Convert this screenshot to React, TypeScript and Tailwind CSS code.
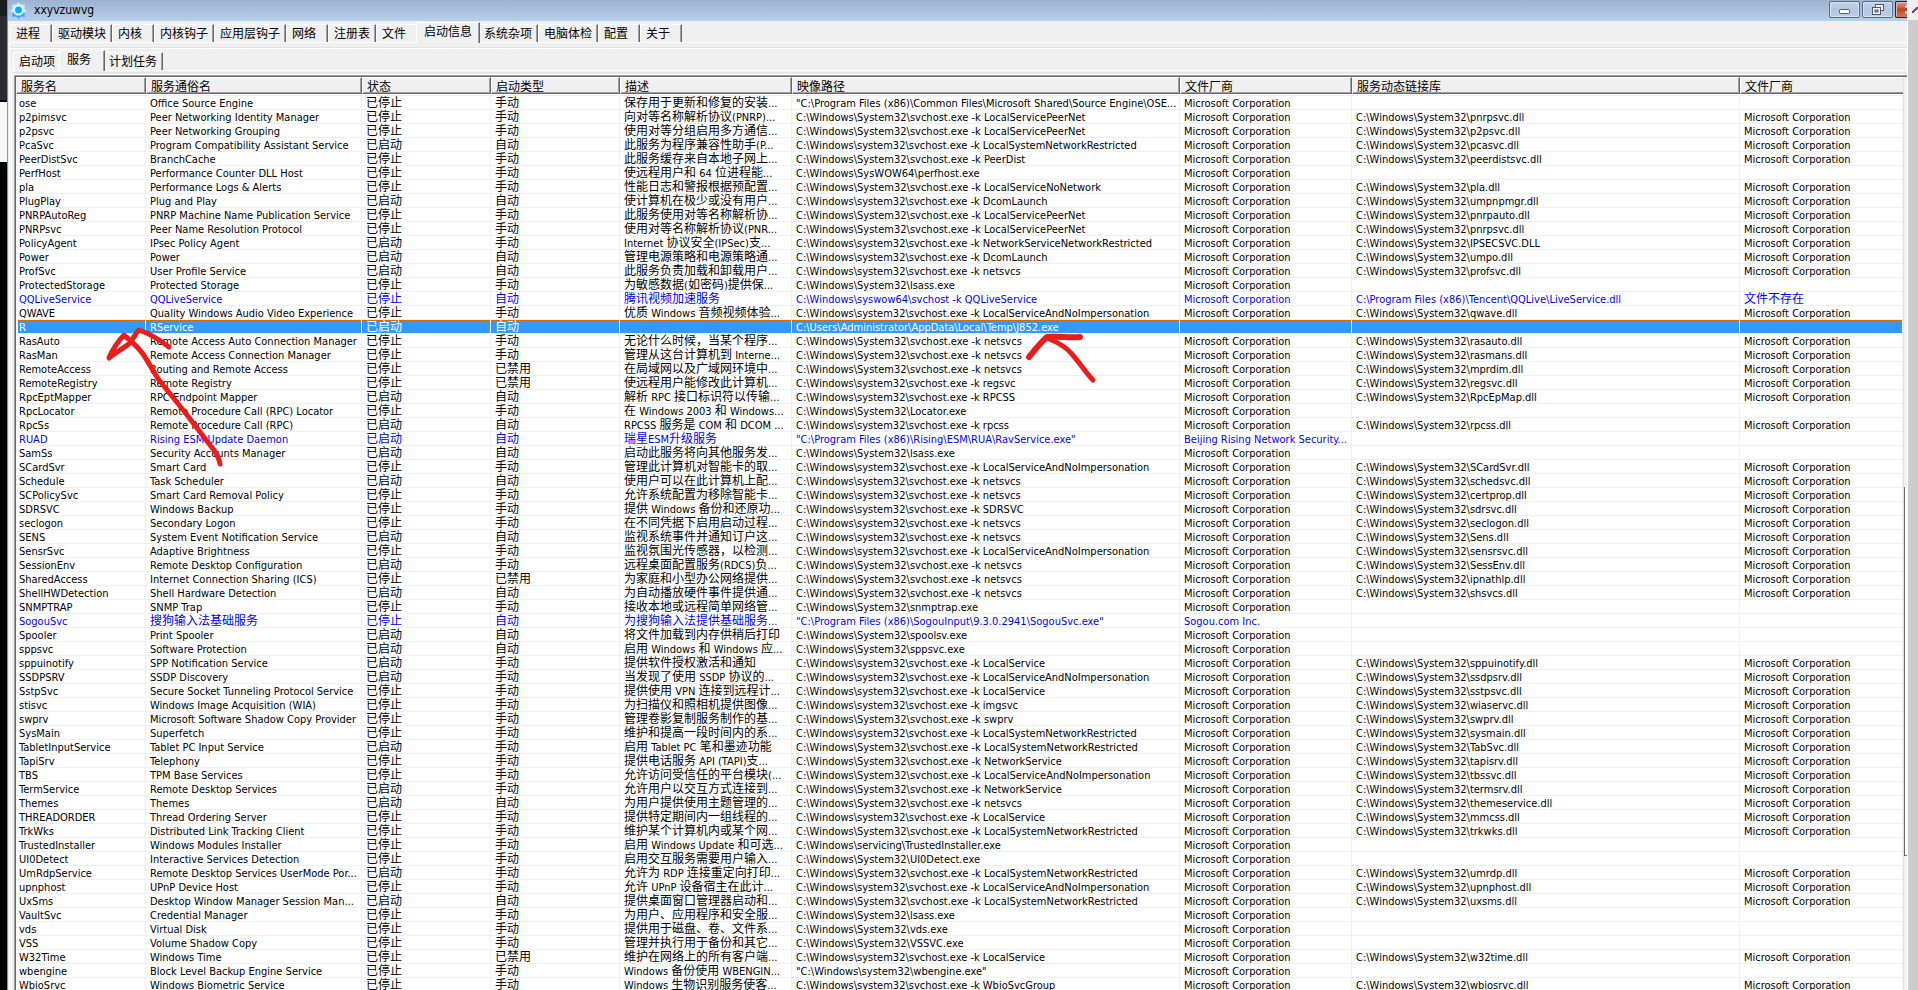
import { Fragment } from "react";

type Start = "自动" | "手动" | "已禁用";
type Service = [name: string, title: string, running: 0 | 1, start: Start, desc: string, path: string, dll?: string];

const A: Start = "自动";
const M: Start = "手动";
const D: Start = "已禁用";
const MS = "Microsoft Corporation";

const host = (group: string) => `C:\\Windows\\system32\\svchost.exe -k ${group}`;
const Host = (group: string) => `C:\\Windows\\System32\\svchost.exe -k ${group}`;
const sys = (file: string) => `C:\\Windows\\System32\\${file}`;

const LSPN = "LocalServicePeerNet";
const LSNR = "LocalSystemNetworkRestricted";
const LSNI = "LocalServiceAndNoImpersonation";
const LS = "LocalService";
const NS = "NetworkService";

const services: Service[] = [
  ["ose", "Office Source Engine", 0, M, "保存用于更新和修复的安装...", '"C:\\Program Files (x86)\\Common Files\\Microsoft Shared\\Source Engine\\OSE...'],
  ["p2pimsvc", "Peer Networking Identity Manager", 0, M, "向对等名称解析协议(PNRP)...", Host(LSPN), "pnrpsvc.dll"],
  ["p2psvc", "Peer Networking Grouping", 0, M, "使用对等分组启用多方通信...", Host(LSPN), "p2psvc.dll"],
  ["PcaSvc", "Program Compatibility Assistant Service", 1, A, "此服务为程序兼容性助手(P...", host(LSNR), "pcasvc.dll"],
  ["PeerDistSvc", "BranchCache", 0, M, "此服务缓存来自本地子网上...", Host("PeerDist"), "peerdistsvc.dll"],
  ["PerfHost", "Performance Counter DLL Host", 0, M, "使远程用户和 64 位进程能...", "C:\\Windows\\SysWOW64\\perfhost.exe"],
  ["pla", "Performance Logs & Alerts", 0, M, "性能日志和警报根据预配置...", Host("LocalServiceNoNetwork"), "pla.dll"],
  ["PlugPlay", "Plug and Play", 1, A, "使计算机在极少或没有用户...", host("DcomLaunch"), "umpnpmgr.dll"],
  ["PNRPAutoReg", "PNRP Machine Name Publication Service", 0, M, "此服务使用对等名称解析协...", Host(LSPN), "pnrpauto.dll"],
  ["PNRPsvc", "Peer Name Resolution Protocol", 0, M, "使用对等名称解析协议(PNR...", Host(LSPN), "pnrpsvc.dll"],
  ["PolicyAgent", "IPsec Policy Agent", 1, M, "Internet 协议安全(IPSec)支...", host("NetworkServiceNetworkRestricted"), "IPSECSVC.DLL"],
  ["Power", "Power", 1, A, "管理电源策略和电源策略通...", host("DcomLaunch"), "umpo.dll"],
  ["ProfSvc", "User Profile Service", 1, A, "此服务负责加载和卸载用户...", host("netsvcs"), "profsvc.dll"],
  ["ProtectedStorage", "Protected Storage", 0, M, "为敏感数据(如密码)提供保...", sys("lsass.exe")],
  ["QQLiveService", "QQLiveService", 0, A, "腾讯视频加速服务", "C:\\Windows\\syswow64\\svchost -k QQLiveService", "C:\\Program Files (x86)\\Tencent\\QQLive\\LiveService.dll"],
  ["QWAVE", "Quality Windows Audio Video Experience", 0, M, "优质 Windows 音频视频体验...", host(LSNI), "qwave.dll"],
  ["R", "RService", 1, A, "", "C:\\Users\\Administrator\\AppData\\Local\\Temp\\J852.exe"],
  ["RasAuto", "Remote Access Auto Connection Manager", 0, M, "无论什么时候，当某个程序...", Host("netsvcs"), "rasauto.dll"],
  ["RasMan", "Remote Access Connection Manager", 0, M, "管理从这台计算机到 Interne...", Host("netsvcs"), "rasmans.dll"],
  ["RemoteAccess", "Routing and Remote Access", 0, D, "在局域网以及广域网环境中...", Host("netsvcs"), "mprdim.dll"],
  ["RemoteRegistry", "Remote Registry", 0, D, "使远程用户能修改此计算机...", host("regsvc"), "regsvc.dll"],
  ["RpcEptMapper", "RPC Endpoint Mapper", 1, A, "解析 RPC 接口标识符以传输...", host("RPCSS"), "RpcEpMap.dll"],
  ["RpcLocator", "Remote Procedure Call (RPC) Locator", 0, M, "在 Windows 2003 和 Windows...", sys("Locator.exe")],
  ["RpcSs", "Remote Procedure Call (RPC)", 1, A, "RPCSS 服务是 COM 和 DCOM ...", host("rpcss"), "rpcss.dll"],
  ["RUAD", "Rising ESM Update Daemon", 1, A, "瑞星ESM升级服务", '"C:\\Program Files (x86)\\Rising\\ESM\\RUA\\RavService.exe"'],
  ["SamSs", "Security Accounts Manager", 1, A, "启动此服务将向其他服务发...", sys("lsass.exe")],
  ["SCardSvr", "Smart Card", 0, M, "管理此计算机对智能卡的取...", host(LSNI), "SCardSvr.dll"],
  ["Schedule", "Task Scheduler", 1, A, "使用户可以在此计算机上配...", host("netsvcs"), "schedsvc.dll"],
  ["SCPolicySvc", "Smart Card Removal Policy", 0, M, "允许系统配置为移除智能卡...", host("netsvcs"), "certprop.dll"],
  ["SDRSVC", "Windows Backup", 0, M, "提供 Windows 备份和还原功...", host("SDRSVC"), "sdrsvc.dll"],
  ["seclogon", "Secondary Logon", 0, M, "在不同凭据下启用启动过程...", host("netsvcs"), "seclogon.dll"],
  ["SENS", "System Event Notification Service", 1, A, "监视系统事件并通知订户这...", host("netsvcs"), "Sens.dll"],
  ["SensrSvc", "Adaptive Brightness", 0, M, "监视氛围光传感器，以检测...", host(LSNI), "sensrsvc.dll"],
  ["SessionEnv", "Remote Desktop Configuration", 1, M, "远程桌面配置服务(RDCS)负...", Host("netsvcs"), "SessEnv.dll"],
  ["SharedAccess", "Internet Connection Sharing (ICS)", 0, D, "为家庭和小型办公网络提供...", Host("netsvcs"), "ipnathlp.dll"],
  ["ShellHWDetection", "Shell Hardware Detection", 1, A, "为自动播放硬件事件提供通...", Host("netsvcs"), "shsvcs.dll"],
  ["SNMPTRAP", "SNMP Trap", 0, M, "接收本地或远程简单网络管...", sys("snmptrap.exe")],
  ["SogouSvc", "搜狗输入法基础服务", 0, A, "为搜狗输入法提供基础服务...", '"C:\\Program Files (x86)\\SogouInput\\9.3.0.2941\\SogouSvc.exe"'],
  ["Spooler", "Print Spooler", 1, A, "将文件加载到内存供稍后打印", sys("spoolsv.exe")],
  ["sppsvc", "Software Protection", 1, A, "启用 Windows 和 Windows 应...", sys("sppsvc.exe")],
  ["sppuinotify", "SPP Notification Service", 1, M, "提供软件授权激活和通知", host(LS), "sppuinotify.dll"],
  ["SSDPSRV", "SSDP Discovery", 1, M, "当发现了使用 SSDP 协议的...", host(LSNI), "ssdpsrv.dll"],
  ["SstpSvc", "Secure Socket Tunneling Protocol Service", 0, M, "提供使用 VPN 连接到远程计...", host(LS), "sstpsvc.dll"],
  ["stisvc", "Windows Image Acquisition (WIA)", 0, M, "为扫描仪和照相机提供图像...", host("imgsvc"), "wiaservc.dll"],
  ["swprv", "Microsoft Software Shadow Copy Provider", 0, M, "管理卷影复制服务制作的基...", Host("swprv"), "swprv.dll"],
  ["SysMain", "Superfetch", 0, M, "维护和提高一段时间内的系...", host(LSNR), "sysmain.dll"],
  ["TabletInputService", "Tablet PC Input Service", 1, M, "启用 Tablet PC 笔和墨迹功能", Host(LSNR), "TabSvc.dll"],
  ["TapiSrv", "Telephony", 0, M, "提供电话服务 API (TAPI)支...", Host(NS), "tapisrv.dll"],
  ["TBS", "TPM Base Services", 0, M, "允许访问受信任的平台模块(...", Host(LSNI), "tbssvc.dll"],
  ["TermService", "Remote Desktop Services", 1, M, "允许用户以交互方式连接到...", Host(NS), "termsrv.dll"],
  ["Themes", "Themes", 1, A, "为用户提供使用主题管理的...", Host("netsvcs"), "themeservice.dll"],
  ["THREADORDER", "Thread Ordering Server", 0, M, "提供特定期间内一组线程的...", host(LS), "mmcss.dll"],
  ["TrkWks", "Distributed Link Tracking Client", 0, M, "维护某个计算机内或某个网...", Host(LSNR), "trkwks.dll"],
  ["TrustedInstaller", "Windows Modules Installer", 0, M, "启用 Windows Update 和可选...", "C:\\Windows\\servicing\\TrustedInstaller.exe"],
  ["UI0Detect", "Interactive Services Detection", 0, M, "启用交互服务需要用户输入...", sys("UI0Detect.exe")],
  ["UmRdpService", "Remote Desktop Services UserMode Por...", 1, M, "允许为 RDP 连接重定向打印...", Host(LSNR), "umrdp.dll"],
  ["upnphost", "UPnP Device Host", 0, M, "允许 UPnP 设备宿主在此计...", host(LSNI), "upnphost.dll"],
  ["UxSms", "Desktop Window Manager Session Man...", 1, A, "提供桌面窗口管理器启动和...", Host(LSNR), "uxsms.dll"],
  ["VaultSvc", "Credential Manager", 0, M, "为用户、应用程序和安全服...", sys("lsass.exe")],
  ["vds", "Virtual Disk", 0, M, "提供用于磁盘、卷、文件系...", sys("vds.exe")],
  ["VSS", "Volume Shadow Copy", 0, M, "管理并执行用于备份和其它...", sys("VSSVC.exe")],
  ["W32Time", "Windows Time", 0, D, "维护在网络上的所有客户端...", host(LS), "w32time.dll"],
  ["wbengine", "Block Level Backup Engine Service", 0, M, "Windows 备份使用 WBENGIN...", '"C:\\Windows\\system32\\wbengine.exe"'],
  ["WbioSrvc", "Windows Biometric Service", 0, M, "Windows 生物识别服务使客...", host("WbioSvcGroup"), "wbiosrvc.dll"],
];

/* Vendors of the third-party services; these rows are shown in blue. */
const thirdParty: Record<string, string> = {
  QQLiveService: MS,
  RUAD: "Beijing Rising Network Security...",
  SogouSvc: "Sogou.com Inc.",
};

const mainTabs = ["进程", "驱动模块", "内核", "内核钩子", "应用层钩子", "网络", "注册表", "文件", "启动信息", "系统杂项", "电脑体检", "配置", "关于"];
const subTabs = ["启动项", "服务", "计划任务"];
const columns = ["服务名", "服务通俗名", "状态", "启动类型", "描述", "映像路径", "文件厂商", "服务动态链接库", "文件厂商"];

/* Chinese runs are set one pixel larger than the Latin text round them. */
function Mixed({ text }: { text: string }) {
  return (
    <>
      {text.split(/([\u3001\u4e00-\u9fff\uff0c]+)/).map((run, i) =>
        i % 2 ? (
          <span key={i} className="text-[12px]">{run}</span>
        ) : (
          <Fragment key={i}>{run}</Fragment>
        ),
      )}
    </>
  );
}

function Tabs({ items, active, label }: { items: string[]; active: string; label: string }) {
  return (
    <div role="tablist" aria-label={label} className="flex items-end">
      {items.map((item) => {
        const on = item === active;
        return (
          <button
            key={item}
            role="tab"
            aria-selected={on}
            className={
              "flex items-start whitespace-nowrap border-l border-t border-l-white border-t-white text-left text-[12px] leading-[18px] rounded-tl-[2px] shadow-[inset_-1px_0_0_#a0a0a0] border-r border-r-[#696969] bg-[#f0f0f0] " +
              (on ? "relative z-10 -mx-[2px] -mb-px h-[21px] min-w-[46px] pl-[7px] pr-[7px]" : "h-[18px] min-w-[42px] px-[5px]")
            }
          >
            {item}
          </button>
        );
      })}
    </div>
  );
}

function AppIcon() {
  return (
    <svg className="h-[17px] w-[17px]" viewBox="0 0 17 17" aria-hidden="true">
      <path d="M8.500 0 L11 2.500 L15 2.500 L14.500 6.500 L17 9 L14.500 11 L15 15 L11 14.500 L8.500 17 L6 14.500 L2 15 L2.500 11 L0 9 L2.500 6.500 L2 2.500 L6 2.500 Z" fill="#c9e8fd" />
      <path d="M2.500 10 L6.500 13.500 L10.500 13.500 L14.500 10 L15 15 L11 14.500 L8.500 17 L6 14.500 L2 15 Z" fill="#4aa3f2" />
      <circle cx="8.500" cy="8" r="5" fill="#e6f5ff" />
      <circle cx="8.500" cy="8" r="3.500" fill="#0cb0f5" />
    </svg>
  );
}

const captionButton =
  "flex h-[17px] w-[31px] items-center justify-center rounded-[2px] border border-[#566a84] bg-linear-to-b from-[#c3d4e8] via-[#b2c8e0] to-[#b9cfe8] shadow-[inset_0_0_0_1px_#d5e2f0]";

function TitleBar() {
  return (
    <header className="flex h-[21px] shrink-0 items-start justify-between overflow-hidden bg-linear-to-b from-[#9bb3d0] to-[#b9d0eb]">
      <div className="flex items-center gap-[7px] pl-[2px]">
        <AppIcon />
        <h1 className="text-[12px] leading-[20px]">xxyvzuwvg</h1>
      </div>
      <div className="flex gap-[2px] pt-px">
        <button aria-label="最小化" className={captionButton}>
          <svg className="mt-1 h-[5px] w-[11px]" viewBox="0 0 11 5"><rect x=".5" y=".5" width="10" height="4" rx="1" fill="#fff" stroke="#535666" /></svg>
        </button>
        <button aria-label="还原" className={captionButton}>
          <svg className="h-[11px] w-[12px]" viewBox="0 0 12 11" fill="#f6f6f6" stroke="#535666">
            <rect x="3.500" y=".5" width="8" height="6" />
            <rect x=".5" y="3.500" width="8" height="7" />
            <rect x="3" y="6" width="3" height="2" fill="#b2c8e0" />
          </svg>
        </button>
        <button aria-label="关闭" className="flex h-[17px] w-[12px] items-center justify-end overflow-hidden rounded-l-[2px] border border-r-0 border-[#43191a] bg-linear-to-b from-[#e0a095] via-[#c4442a] to-[#d0785a] shadow-[inset_1px_1px_0_#e9b8ae]">
          <svg className="h-[9px] w-[2px]" viewBox="0 0 2 9"><path d="M0 0h2v3H1v3h1v3H0V6h1V3H0Z" fill="#fff" stroke="#535666" strokeWidth=".5" /></svg>
        </button>
      </div>
    </header>
  );
}

function Cell({ text, first }: { text: string; first?: boolean }) {
  return (
    <td className={"h-[14px] border-b border-r border-[#f0f0f0] p-0 " + (first ? "border-l-2 border-l-white pl-px" : "pl-[4px]")}>
      <div className="h-[13px] whitespace-nowrap leading-[15px]">
        <Mixed text={text} />
      </div>
    </td>
  );
}

function ServiceTable() {
  return (
    <table className="w-full table-fixed border-separate border-spacing-0 text-[11px]">
      <colgroup>
        <col className="w-[130px]" />
        <col className="w-[216px]" />
        <col className="w-[129px]" />
        <col className="w-[129px]" />
        <col className="w-[172px]" />
        <col className="w-[388px]" />
        <col className="w-[172px]" />
        <col className="w-[388px]" />
        <col />
      </colgroup>
      <thead>
        <tr>
          {columns.map((column, i) => (
            <th
              key={i}
              className="h-[17px] border-b border-l border-r border-t border-b-[#696969] border-l-white border-r-[#696969] border-t-white bg-[#f0f0f0] p-0 pl-[4px] text-left text-[12px] font-normal leading-[14px] shadow-[inset_-1px_-1px_0_#a0a0a0] last:border-r-0 last:shadow-[inset_0_-1px_0_#a0a0a0]"
            >
              <div className="h-[14px] whitespace-nowrap pt-px">{column}</div>
            </th>
          ))}
        </tr>
      </thead>
      <tbody>
        <tr aria-hidden="true">
          {columns.map((_, i) => (
            <td key={i} className="h-[2px] border-b border-[#f0f0f0] p-0" />
          ))}
        </tr>
        {services.map(([name, title, running, start, desc, path, dll]) => {
          const selected = name === "R";
          const vendor = selected ? "" : (thirdParty[name] ?? MS);
          const tone = selected
            ? "bg-[#3399ff] text-white bg-[repeating-linear-gradient(90deg,#cc6600_0_1px,#3399ff_1px_2px)] bg-[length:100%_1px] bg-no-repeat"
            : name in thirdParty
              ? "text-[#0000ff]"
              : "";
          return (
            <tr key={name} aria-selected={selected} className={tone}>
              <Cell text={name} first />
              <Cell text={title} />
              <Cell text={running ? "已启动" : "已停止"} />
              <Cell text={start} />
              <Cell text={desc} />
              <Cell text={path} />
              <Cell text={vendor} />
              <Cell text={dll ? (dll.includes("\\") ? dll : sys(dll)) : ""} />
              <Cell text={dll ? (name === "QQLiveService" ? "文件不存在" : MS) : ""} />
            </tr>
          );
        })}
      </tbody>
    </table>
  );
}

/* Red pen marks drawn over the list. */
function Marks() {
  return (
    <svg className="pointer-events-none absolute left-0 top-0 z-20 h-[480px] w-[1110px]" viewBox="0 0 1110 480" fill="none" stroke="#ea1c1c" strokeLinecap="round" strokeLinejoin="round" aria-hidden="true">
      <path strokeWidth="5" d="M169 347 C160 340 148 333 139 330 C135 333 134 338 130 343 C124 348 116 352 109 358 C112 350 119 340 124 335 C130 340 138 347 143 354 C149 363 153 371 159 380 L184 411 L210 445 C216 452 219 457 220 464" />
      <path strokeWidth="6" d="M1029 357 C1034 351 1040 343 1047 337 C1057 336 1070 338 1080 337" />
      <path strokeWidth="5" d="M1047 338 C1057 342 1066 347 1071 353 C1080 363 1086 373 1093 380" />
    </svg>
  );
}

export default function App() {
  return (
    <div className="relative flex h-screen overflow-hidden bg-black font-['DejaVu_Sans_Condensed','Noto_Sans_CJK_SC',sans-serif] text-black">
      <div className="flex w-[7px] shrink-0 flex-col bg-[#020403]" aria-hidden="true">
        <div className="h-4 bg-[#1b1b1e]" />
        <div className="h-[86px] border-b-2 border-black bg-[#2c2a34]" />
        <div className="h-[60px] bg-[#f7f7f7]" />
      </div>

      <main className="flex min-w-0 flex-1 flex-col border-l border-[#8f9298] bg-[#f0f0f0]">
        <TitleBar />
        <div className="flex min-h-0 flex-1 flex-col pt-px">
          <div className="flex h-5 items-end pl-[2px]">
            <Tabs items={mainTabs} active="启动信息" label="主菜单" />
          </div>
          <div className="ml-px flex min-h-0 flex-1 flex-col border-l border-t border-white">
            <div className="mt-1 border-t border-[#e3e3e3]" />
            <div className="flex h-[22px] items-end border-t border-white pl-[3px]">
              <Tabs items={subTabs} active="服务" label="启动信息" />
            </div>
            <div className="ml-px flex min-h-0 flex-1 flex-col border-l border-t border-white">
              <div className="mt-px border-t border-[#e3e3e3]" />
              <div className="mt-px border-t border-white" />
              <div className="ml-[2px] flex min-h-0 flex-1 border-l border-t border-[#a0a0a0]">
                <div className="flex min-w-0 flex-1 border-l border-t border-[#696969]">
                  <section className="min-w-0 flex-1 overflow-hidden bg-white" aria-label="服务">
                    <ServiceTable />
                  </section>
                  <div className="flex w-1 shrink-0 flex-col border-l border-[#e3e3e3]" aria-hidden="true">
                    <div className="h-[410px]" />
                    <div className="h-[369px] border-b border-l border-[#696969] bg-white" />
                  </div>
                </div>
              </div>
            </div>
          </div>
        </div>
      </main>

      <div className="flex w-[11px] shrink-0 flex-col border-l border-white bg-[#cdcdcd]" aria-hidden="true">
        <div className="flex h-5 items-center justify-end bg-[#f0f0f0]">
          <svg className="h-[6px] w-[6px]" viewBox="0 0 6 6" fill="none" stroke="#505050" strokeWidth="2"><path d="M0 6 L6 0" /></svg>
        </div>
      </div>

      <Marks />
    </div>
  );
}
